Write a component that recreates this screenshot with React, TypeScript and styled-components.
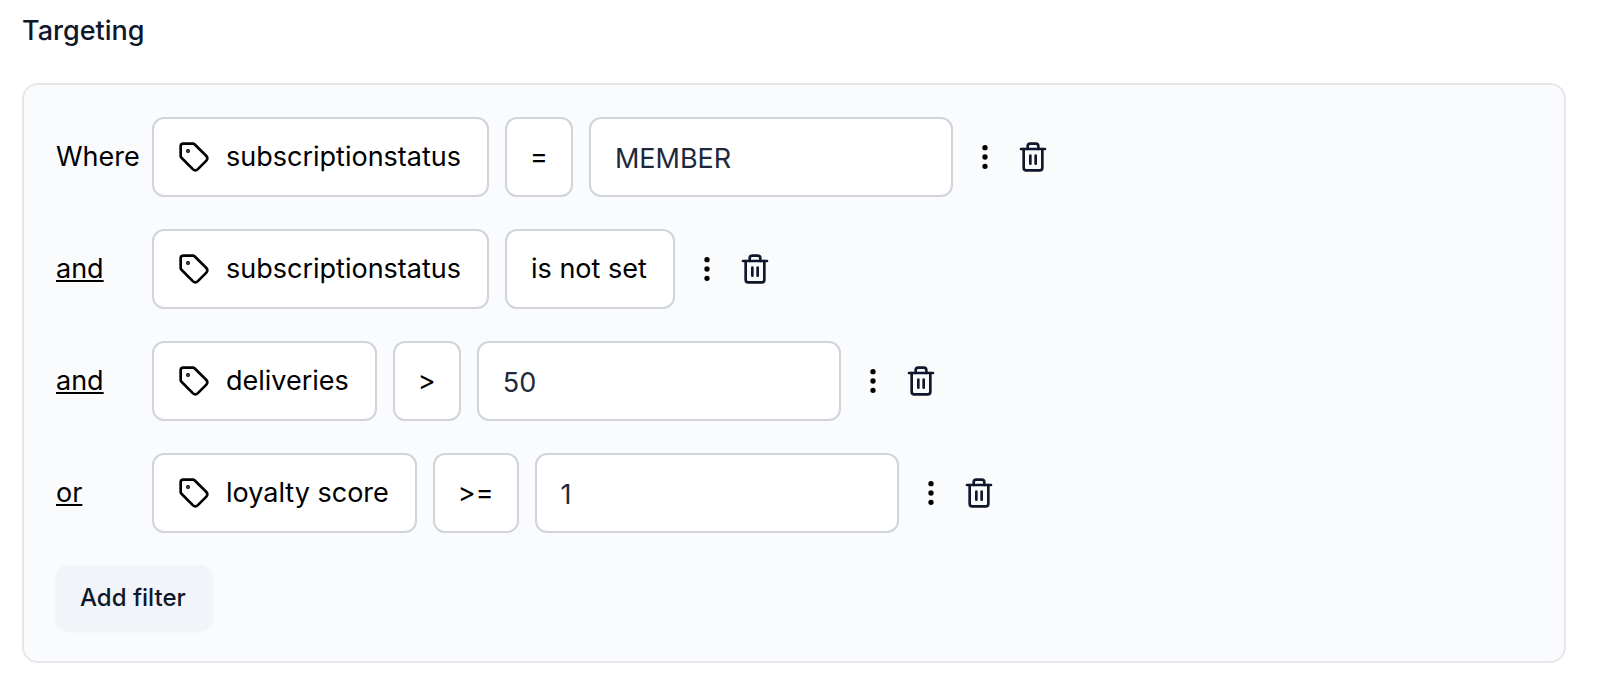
import React from "react";
import styled, { createGlobalStyle } from "styled-components";
import { EllipsisVertical, Tag, Trash2 } from "lucide-react";

const GlobalStyle = createGlobalStyle`
  *, *::before, *::after { box-sizing: border-box; }
  body {
    margin: 0;
    background: #fff;
    color: #000;
    font-family: Inter, "Liberation Sans", sans-serif;
    font-size: 27px;
    line-height: 40px;
  }
  button, input { font: inherit; }
`;

const Page = styled.main`
  padding: 11px 36px 23px 22px;
`;

const Title = styled.h2`
  margin: 0 0 32px;
  color: #0f172a;
  font-size: 27px;
  font-weight: 500;
`;

const Panel = styled.section`
  display: flex;
  flex-direction: column;
  align-items: flex-start;
  gap: 32px;
  padding: 32px;
  border: 2px solid #e5e7eb;
  border-radius: 16px;
  background: #fafbfd;
`;

const Row = styled.div`
  display: flex;
  align-items: center;
  gap: 16px;
`;

const Joiner = styled.div`
  width: 80px;
  white-space: nowrap;
`;

const JoinerButton = styled.button`
  padding: 0;
  border: 0;
  background: none;
  color: inherit;
  text-decoration: underline;
  cursor: pointer;
`;

const Chip = styled.button<{ $compact?: boolean }>`
  display: flex;
  align-items: center;
  gap: 16px;
  height: 80px;
  padding: ${({ $compact }) => ($compact ? "0 23px" : "0 26px 0 24px")};
  border: 2px solid #d1d5db;
  border-radius: 12px;
  background: #fff;
  color: #000;
  white-space: nowrap;
  cursor: pointer;
`;

const ValueInput = styled.input`
  width: 364px;
  height: 80px;
  padding: 2px 24px 0;
  border: 2px solid #d1d5db;
  border-radius: 12px;
  background: #fff;
  color: #1e293b;
`;

const IconButton = styled.button<{ $tone: string }>`
  display: flex;
  padding: 0;
  border: 0;
  background: none;
  color: ${({ $tone }) => $tone};
  cursor: pointer;
`;

const AddButton = styled.button`
  height: 64px;
  padding: 2px 26px 0 24px;
  border: 0;
  border-radius: 12px;
  background: #f1f5f9;
  box-shadow: 0 2px 4px rgba(0, 0, 0, 0.05);
  color: #0f172a;
  font-size: 24px;
  font-weight: 500;
  cursor: pointer;
`;

type Filter = {
  joiner: "Where" | "and" | "or";
  field: string;
  operator: string;
  value?: string;
};

const filters: Filter[] = [
  { joiner: "Where", field: "subscriptionstatus", operator: "=", value: "MEMBER" },
  { joiner: "and", field: "subscriptionstatus", operator: "is not set" },
  { joiner: "and", field: "deliveries", operator: ">", value: "50" },
  { joiner: "or", field: "loyalty score", operator: ">=", value: "1" },
];

function FilterRow({ joiner, field, operator, value }: Filter) {
  const hasValue = value !== undefined;
  return (
    <Row>
      <Joiner>
        {joiner === "Where" ? joiner : <JoinerButton type="button">{joiner}</JoinerButton>}
      </Joiner>
      <Chip type="button">
        <Tag size={32} />
        {field}
      </Chip>
      <Chip type="button" $compact={hasValue}>
        {operator}
      </Chip>
      {hasValue && <ValueInput aria-label={`${field} value`} defaultValue={value} />}
      <IconButton type="button" $tone="#000" aria-label="Filter options">
        <EllipsisVertical size={32} />
      </IconButton>
      <IconButton type="button" $tone="#0f172a" aria-label="Delete filter">
        <Trash2 size={32} />
      </IconButton>
    </Row>
  );
}

export default function App() {
  return (
    <>
      <GlobalStyle />
      <Page>
        <Title>Targeting</Title>
        <Panel>
          {filters.map((filter, index) => (
            <FilterRow key={index} {...filter} />
          ))}
          <AddButton type="button">Add filter</AddButton>
        </Panel>
      </Page>
    </>
  );
}
